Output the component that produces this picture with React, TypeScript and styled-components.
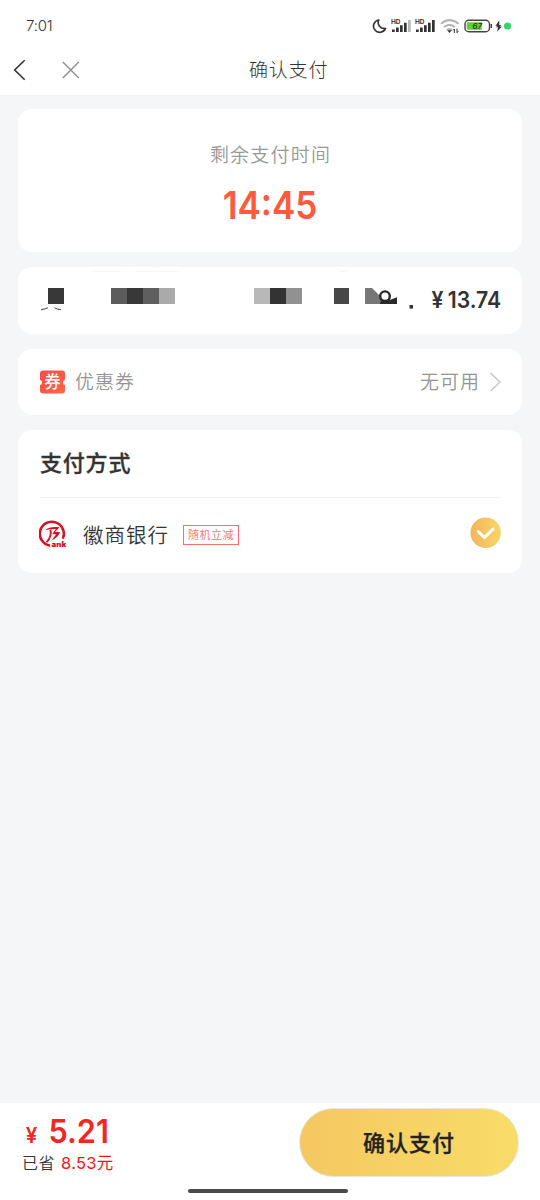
import { FC } from 'react'
import styled, { createGlobalStyle } from 'styled-components'

const GlobalStyle = createGlobalStyle`
  * {
    box-sizing: border-box;
  }

  body {
    margin: 0;
    background: #f4f6f8;
    font-family: 'Noto Sans CJK SC', sans-serif;
    color: #333333;
  }
`

const Page = styled.div`
  width: 540px;
  height: 1200px;
  display: flex;
  flex-direction: column;
  overflow: hidden;
  background: #f4f6f8;
`

const StatusBar = styled.div`
  height: 46px;
  padding: 6px 28px 0 26px;
  display: flex;
  align-items: center;
  justify-content: space-between;
  background: #ffffff;
`

const Clock = styled.span`
  padding-bottom: 1px;
  font-family: Inter, sans-serif;
  font-size: 15px;
  font-weight: 300;
  letter-spacing: -0.2px;
  color: #333333;
`

const NavBar = styled.div`
  height: 49px;
  padding: 0 12px 2px;
  display: grid;
  grid-template-columns: 237px 1fr;
  align-items: center;
  background: #ffffff;
`

const NavActions = styled.div`
  display: flex;
  align-items: center;
  gap: 34px;
`

const NavTitle = styled.div`
  padding-bottom: 1px;
  font-size: 19px;
  line-height: 28px;
  font-weight: 300;
  letter-spacing: 0.8px;
`

const Content = styled.div`
  flex: 1;
  padding: 14px 18px;
  display: flex;
  flex-direction: column;
  gap: 15px;
`

const Card = styled.div<{ $height: number }>`
  height: ${(props) => props.$height}px;
  padding: 0 21px 0 22px;
  border-radius: 14px;
  background: #ffffff;
`

const TimeCard = styled(Card)`
  display: flex;
  flex-direction: column;
  align-items: center;
  padding-top: 31px;
`

const TimeLabel = styled.div`
  font-size: 19px;
  line-height: 28px;
  letter-spacing: 1.2px;
  font-weight: 350;
  color: #999999;
`

const TimeLeft = styled.div`
  margin-top: 13px;
  font-family: Inter, sans-serif;
  font-size: 38.5px;
  line-height: 48px;
  font-weight: 600;
  transform: scaleX(0.91);
  color: #ff5a3c;
`

const RowCard = styled(Card)`
  display: flex;
  align-items: center;
  justify-content: space-between;
`

const Amount = styled.div`
  padding-bottom: 1px;
  font-family: Inter, 'Noto Sans CJK SC', sans-serif;
  font-size: 22.5px;
  line-height: 30px;
  font-weight: 600;
  white-space: nowrap;
  word-spacing: -1px;
  transform: scaleX(0.94);
  transform-origin: right;
`

const RowGroup = styled.div<{ $gap: number }>`
  display: flex;
  align-items: center;
  gap: ${(props) => props.$gap}px;
`

const MutedText = styled.span`
  padding-bottom: 2px;
  font-size: 19px;
  line-height: 28px;
  font-weight: 350;
  letter-spacing: 1px;
  color: #959595;
`

const MethodTitle = styled.div`
  height: 68px;
  padding-bottom: 5px;
  display: flex;
  align-items: center;
  border-bottom: 1px solid #f3f3f3;
  font-size: 22px;
  font-weight: 500;
  letter-spacing: 0.8px;
  -webkit-text-stroke: 0.3px #333333;
`

const MethodRow = styled.div`
  height: 72px;
  margin-left: -1px;
  display: flex;
  align-items: center;
`

const BankName = styled.span`
  margin-left: 16px;
  padding-bottom: 1px;
  font-size: 20.5px;
  line-height: 30px;
  font-weight: 350;
  letter-spacing: 1px;
`

const Tag = styled.span`
  width: 56px;
  height: 20px;
  margin: 2px auto 0 14px;
  padding-bottom: 2px;
  display: flex;
  align-items: center;
  justify-content: center;
  border: 1px solid #fb6e6a;
  font-size: 11px;
  font-weight: 350;
  letter-spacing: 0.5px;
  white-space: nowrap;
  color: #fb6e6a;
`

const Footer = styled.div`
  height: 97px;
  background: #ffffff;
`

const FooterBody = styled.div`
  height: 86px;
  padding: 5px 21px 0 22px;
  display: flex;
  justify-content: space-between;
`

const Total = styled.div`
  display: flex;
  align-items: baseline;
  gap: 12px;
  padding: 3px 0 0 4px;
  font-family: Inter, 'Noto Sans CJK SC', sans-serif;
  font-size: 33px;
  line-height: 40px;
  font-weight: 600;
  transform: scaleX(0.93);
  transform-origin: left;
  color: #f0281e;
`

const Yen = styled.span`
  font-size: 22px;
`

const Saved = styled.div`
  margin-top: -4px;
  font-size: 16px;
  line-height: 22px;
  font-weight: 350;
  letter-spacing: 0.5px;
`

const SavedAmount = styled.span`
  margin-left: 2px;
  font-family: Inter, 'Noto Sans CJK SC', sans-serif;
  font-size: 16.5px;
  font-weight: 400;
  letter-spacing: 0.3px;
  color: #fb1212;
`

const PayButton = styled.button`
  width: 220px;
  height: 69px;
  padding: 0 0 4px;
  border: 1px solid #e8e6df;
  border-radius: 35px;
  background: linear-gradient(90deg, #f5c861, #f8dc68);
  font-family: inherit;
  font-size: 22px;
  font-weight: 500;
  letter-spacing: 1px;
  -webkit-text-stroke: 0.3px #222222;
  color: #222222;
`

const HomeIndicator = styled.div`
  width: 160px;
  height: 4px;
  margin: 0 auto;
  transform: translateX(-2px);
  border-radius: 2px;
  background: #4a4a4a;
`

const blocks = [
  { x: 8, w: 16, fill: '#383838' },
  { x: 71, w: 16, fill: '#5c5c5c' },
  { x: 87, w: 16, fill: '#383838' },
  { x: 103, w: 16, fill: '#5f5f5f' },
  { x: 119, w: 16, fill: '#aaaaaa' },
  { x: 214, w: 16, fill: '#b8b8b8' },
  { x: 230, w: 16, fill: '#333333' },
  { x: 246, w: 16, fill: '#919191' },
  { x: 294, w: 15, fill: '#474747' },
]

const StatusIcons: FC = () => (
  <svg width="140" height="20" viewBox="372 16 140 20" fill="none">
    <path
      d="M378.8 20A6.2 6.2 0 1 0 385.5 28.4A6 6 0 0 1 378.8 20Z"
      stroke="#333"
      strokeWidth="1.6"
      strokeLinejoin="round"
    />
    {[391, 415].map((x, index) => (
      <g key={x} transform={`translate(${x} 0)`}>
        <text
          x="0"
          y="24"
          fill="#333"
          fontFamily="Inter, sans-serif"
          fontSize="6"
          fontWeight="700"
          textLength="9.5"
          lengthAdjust="spacingAndGlyphs"
        >
          HD
        </text>
        <path
          d="M1 29.5h2.7V32H1zM5 27.5h2.7V32H5zM9 25.2h2.7V32H9zM13 22.8h2.7V32H13z"
          fill="#333"
        />
        <path d="M17 20h2.7v12H17z" fill={index ? '#333' : '#b5b5b5'} />
      </g>
    ))}
    <g stroke="#b4b4b4" strokeWidth="2">
      <path d="M441 23.8Q449.5 16.5 458.5 23.8" />
      <path d="M444 27.1Q449.5 22.6 455 27.1" />
      <path d="M446.8 30Q449.5 28 452 30" />
    </g>
    <path d="M447.2 30.3h4.6l-2.3 2.6z" fill="#333" />
    <path d="M454.4 29v4M457 28.7v4M453 30.5l1.4-1.5M458.4 31.2L457 32.7" stroke="#333" />
    <rect x="465" y="20.3" width="24.5" height="11.4" rx="3.8" stroke="#444" strokeWidth="1.4" />
    <path d="M491.3 24v4" stroke="#444" strokeWidth="1.5" />
    <path d="M468 22.2h13.8v7.6H468a1.5 1.5 0 0 1-1.3-1.5v-4.6a1.5 1.5 0 0 1 1.3-1.5z" fill="#67cc35" />
    <text
      x="472.5"
      y="28.8"
      fill="#22341b"
      fontFamily="Inter, sans-serif"
      fontSize="8"
      fontStyle="italic"
      fontWeight="500"
    >
      67
    </text>
    <path
      d="M499.3 20.5l-3.8 5.2h2.2l-2 1.5h2.3l-.9 4.6 4.8-5.3h-2.5l2.3-1.6h-2.5z"
      fill="#333"
    />
    <circle cx="507.5" cy="26" r="3.6" fill="#35d567" />
  </svg>
)

const BackIcon: FC = () => (
  <svg width="16" height="22" viewBox="0 0 16 22" fill="none">
    <path d="M12.7 1.2L2.7 11L12.7 20.8" stroke="#333" strokeWidth="1.6" />
  </svg>
)

const CloseIcon: FC = () => (
  <svg width="18" height="18" viewBox="0 0 18 18" fill="none">
    <path d="M.8 1l16 16M16.8 1L.8 17" stroke="#8c8c8c" strokeWidth="1.3" />
  </svg>
)

const MaskedItem: FC = () => (
  <svg width="376" height="67" viewBox="0 0 376 67">
    <path d="M48 5Q60 2.4 75 4Q89 5.5 100 4Q125 2.8 145 5zM298 5Q306 1.5 312 5z" fill="#f6f6f7" />
    {blocks.map((block) => (
      <rect key={block.x} x={block.x} y="21" width={block.w} height="16" fill={block.fill} />
    ))}
    <path d="M1 42.8Q5 42 8 40.7M14.5 40.8Q17 42.4 21 42.6" stroke="#444" fill="none" />
    <path d="M325 21h7l9 9v7h-16z" fill="#777" />
    <path d="M341 33l8 .3 8-3V37h-17z" fill="#292929" />
    <circle cx="345" cy="29.2" r="4.8" fill="#fff" stroke="#292929" strokeWidth="2.4" />
    <path d="M369.5 38h3.5v3.6h-3.5z" fill="#333" />
  </svg>
)

const CouponIcon: FC = () => (
  <svg width="25" height="24" viewBox="0 0 25 24">
    <defs>
      <linearGradient id="coupon" x2="1" y2="1">
        <stop stopColor="#f84c45" />
        <stop offset="1" stopColor="#ff6747" />
      </linearGradient>
    </defs>
    <path
      d="M3 .5h19a3 3 0 0 1 3 3v6.2a2.8 2.8 0 0 0 0 5.4v5.4a3 3 0 0 1-3 3H3a3 3 0 0 1-3-3v-5.4a2.8 2.8 0 0 0 0-5.4V3.5a3 3 0 0 1 3-3z"
      fill="url(#coupon)"
    />
    <text
      x="12.5"
      y="18"
      textAnchor="middle"
      fill="#fff"
      fontFamily="'Noto Sans CJK SC', sans-serif"
      fontSize="16.5"
      fontWeight="500"
    >
      券
    </text>
  </svg>
)

const ChevronIcon: FC = () => (
  <svg width="12" height="20" viewBox="0 0 12 20" fill="none">
    <path d="M1.5 1l9.5 9-9.5 9" stroke="#c8c8c8" strokeWidth="1.5" />
  </svg>
)

const BankLogo: FC = () => (
  <svg width="28" height="28" viewBox="0 0 28 28" fill="none">
    <path
      d="M11 25.6A12 12 0 1 1 23.8 18.6"
      stroke="#d90f22"
      strokeWidth="2.6"
    />
    <path
      d="M6 10.2C9 7.2 14.5 6.4 20.5 7.2L16 12H21C19.4 16.4 16.2 18.8 12.6 20.2L17.2 14.2H13.2L16.8 9C13 8.8 9.5 9.2 6 10.2z"
      fill="#d90f22"
    />
    <path d="M11.5 9.5C12.5 14.5 11.2 18.5 7.6 22.2" stroke="#d90f22" strokeWidth="1.9" />
    <text
      x="12.6"
      y="27.3"
      fill="#d90f22"
      fontFamily="Inter, sans-serif"
      fontSize="7"
      fontWeight="900"
      textLength="14.6"
      lengthAdjust="spacingAndGlyphs"
    >
      ank
    </text>
  </svg>
)

const CheckedIcon: FC = () => (
  <svg width="31" height="34" viewBox="0 0 31 34" fill="none">
    <defs>
      <linearGradient id="checked">
        <stop stopColor="#f4b35f" />
        <stop offset="1" stopColor="#f8d763" />
      </linearGradient>
    </defs>
    <circle cx="15.7" cy="15.7" r="15.2" fill="url(#checked)" />
    <path
      d="M8.3 14.6L14.5 20.6L23 12.1"
      stroke="#fff"
      strokeWidth="2.9"
      strokeLinecap="round"
      strokeLinejoin="round"
    />
  </svg>
)

const App: FC = () => {
  return (
    <Page>
      <GlobalStyle />
      <StatusBar>
        <Clock>7:01</Clock>
        <StatusIcons />
      </StatusBar>
      <NavBar>
        <NavActions>
          <BackIcon />
          <CloseIcon />
        </NavActions>
        <NavTitle>确认支付</NavTitle>
      </NavBar>
      <Content>
        <TimeCard $height={143}>
          <TimeLabel>剩余支付时间</TimeLabel>
          <TimeLeft>14:45</TimeLeft>
        </TimeCard>
        <RowCard $height={67}>
          <MaskedItem />
          <Amount>¥ 13.74</Amount>
        </RowCard>
        <RowCard $height={66}>
          <RowGroup $gap={10}>
            <CouponIcon />
            <MutedText>优惠券</MutedText>
          </RowGroup>
          <RowGroup $gap={9}>
            <MutedText>无可用</MutedText>
            <ChevronIcon />
          </RowGroup>
        </RowCard>
        <Card $height={143}>
          <MethodTitle>支付方式</MethodTitle>
          <MethodRow>
            <BankLogo />
            <BankName>徽商银行</BankName>
            <Tag>随机立减</Tag>
            <CheckedIcon />
          </MethodRow>
        </Card>
      </Content>
      <Footer>
        <FooterBody>
          <div>
            <Total>
              <Yen>¥</Yen>
              <span>5.21</span>
            </Total>
            <Saved>
              已省 <SavedAmount>8.53元</SavedAmount>
            </Saved>
          </div>
          <PayButton>确认支付</PayButton>
        </FooterBody>
        <HomeIndicator />
      </Footer>
    </Page>
  )
}

export default App
